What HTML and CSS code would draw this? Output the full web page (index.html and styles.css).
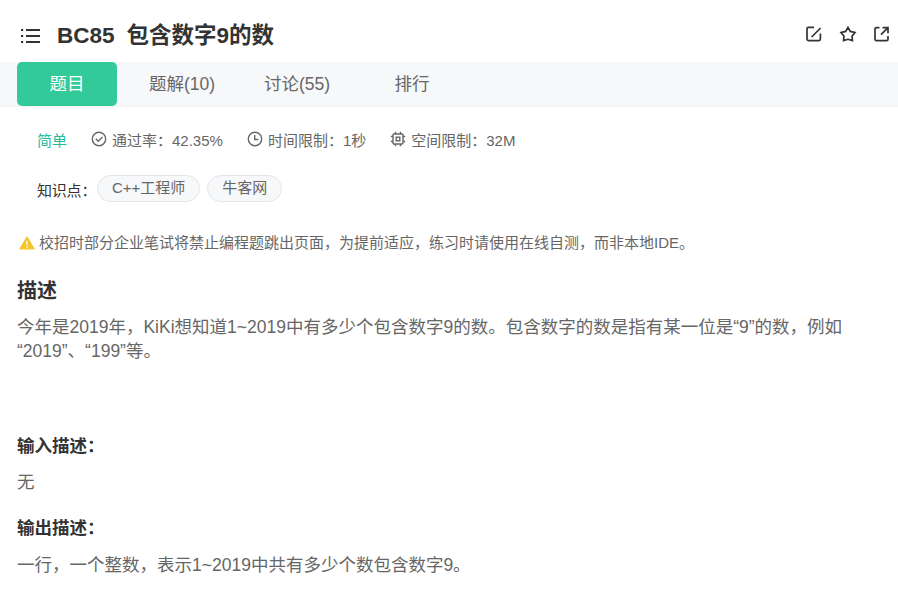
FILE: index.html
```
<!DOCTYPE html>
<html lang="zh-CN">
<head>
<meta charset="utf-8">
<title>BC85 包含数字9的数</title>
<link rel="stylesheet" href="styles.css">
</head>
<body>
<header class="header">
  <svg class="list-icon" width="20" height="16" viewBox="0 0 20 16"><path d="M5 2H19M5 8H19M5 14H19M0 2H2.2M0 8H2.2M0 14H2.2" stroke="#333" stroke-width="2"/></svg>
  <h1 class="title"><span>BC85</span><span>包含数字9的数</span></h1>
  <div class="actions">
    <svg width="16" height="16" viewBox="0 0 16 16"><path d="M8 1.3H2.6Q1 1.3 1 2.9V13Q1 14.6 2.6 14.6H12.8Q14.4 14.6 14.4 13V7.6M5.6 11L14.6 2"/></svg>
    <svg width="18" height="16" viewBox="0 0 18 16"><path d="M9 1.4L11.3 5.4L16 6.5L13.1 10L13.4 14.6L9 13.3L4.6 14.6L4.9 10L2 6.5L6.7 5.4Z"/></svg>
    <svg width="16" height="16" viewBox="0 0 16 16"><path d="M5.5 1.7H2.4Q1 1.7 1 3.1V13.2Q1 14.6 2.4 14.6H12.6Q14 14.6 14 13.2V10M8.5 1.6H14V7.2M14 1.6L7 8.7"/></svg>
  </div>
</header>
<nav class="tabs">
  <a class="tab active">题目</a>
  <a class="tab">题解(10)</a>
  <a class="tab">讨论(55)</a>
  <a class="tab">排行</a>
</nav>
<main class="content">
  <div class="meta">
    <span class="level">简单</span>
    <span class="stat"><svg width="16" height="16" viewBox="0 0 16 16"><circle cx="8" cy="8" r="6.7"/><path d="M4.8 7.8L7.2 10.2L11.5 5.9"/></svg>通过率：42.35%</span>
    <span class="stat"><svg width="16" height="16" viewBox="0 0 16 16"><circle cx="8" cy="8" r="6.7"/><path d="M7.7 4V8.5H11.4"/></svg>时间限制：1秒</span>
    <span class="stat"><svg width="16" height="16" viewBox="0 0 16 16"><rect x="3" y="3" width="10" height="10" rx="1"/><rect x="6.2" y="6.2" width="3.6" height="3.6"/><path d="M5.5 .8V3M10.5 .8V3M5.5 13V15.2M10.5 13V15.2M.8 5.5H3M.8 10.5H3M13 5.5H15.2M13 10.5H15.2"/></svg>空间限制：32M</span>
  </div>
  <div class="topics">
    <span class="topics-label">知识点：</span>
    <span class="tag">C++工程师</span>
    <span class="tag">牛客网</span>
  </div>
  <div class="notice"><svg width="16" height="14" viewBox="0 0 16 14"><path d="M8 1L15 12.8H1Z" fill="#f3c62d" stroke="#f3c62d" stroke-width="1.2" stroke-linejoin="round"/><path d="M8 4.8V8.8M8 10V11.5" stroke="#fff" stroke-width="1.4"/></svg>校招时部分企业笔试将禁止编程题跳出页面，为提前适应，练习时请使用在线自测，而非本地IDE。</div>
  <h2 class="heading">描述</h2>
  <p class="text description">今年是2019年，KiKi想知道1~2019中有多少个包含数字9的数。包含数字的数是指有某一位是“9”的数，例如“2019”、“199”等。</p>
  <h3 class="subheading">输入描述：</h3>
  <p class="text">无</p>
  <h3 class="subheading output">输出描述：</h3>
  <p class="text">一行，一个整数，表示1~2019中共有多少个数包含数字9。</p>
</main>
</body>
</html>
```
FILE: styles.css
```
* { box-sizing: border-box; }
body {
  margin: 0;
  background: #fff;
  color: #666;
  font-family: "Liberation Sans", "Noto Sans CJK SC", sans-serif;
  font-size: 15px;
}
h1, h2, h3, p { margin: 0; }
svg { flex: none; fill: none; }
.header {
  display: flex;
  align-items: center;
  height: 62px;
  padding: 9px 8px 0 21px;
}
.list-icon { margin-right: 16px; }
.title {
  display: flex;
  gap: 12px;
  color: #333;
  font-size: 22.5px;
  line-height: 30px;
}
.actions { display: flex; gap: 17px; margin: 0 1px 3px auto; transform: none; }
.header .actions { margin-right: 0; }
.actions svg { stroke: #333; stroke-width: 1.7; }
.tabs {
  display: flex;
  gap: 15px;
  height: 45px;
  padding-left: 17px;
  background: #f7f8fa;
  border-bottom: 1px solid #f2f3f5;
}
.tab {
  width: 100px;
  height: 44px;
  border-radius: 5px;
  font-size: 17.5px;
  line-height: 44px;
  text-align: center;
}
.active { background: #32ca99; color: #fff; }
.content { padding: 23px 17px 0; }
.meta {
  display: flex;
  gap: 24px;
  height: 22px;
  padding-left: 20px;
  line-height: 22px;
}
.level { color: #25bb9b; }
.stat { display: flex; }
.stat svg { margin: 1px 5px 0 0; stroke: #666; stroke-width: 1.4; }
.topics {
  display: flex;
  height: 27px;
  margin-top: 23px;
  padding-left: 20px;
}
.topics-label { width: 60px; color: #333; line-height: 32px; letter-spacing: -0.2px; white-space: nowrap; }
.tag {
  height: 27px;
  margin-right: 7px;
  padding: 0 14px;
  border: 1px solid #e3e5e8;
  border-radius: 14px;
  background: #f7f8fa;
  line-height: 24px;
}
.notice {
  display: flex;
  margin-top: 30px;
  padding-left: 2px;
  line-height: 22px;
}
.notice svg { margin: 4px 4px 0 0; }
.heading {
  margin-top: 22px;
  color: #333;
  font-size: 20px;
  line-height: 30px;
}
.text { font-size: 17.5px; line-height: 24px; }
.description { height: 119px; margin-top: 9px; }
.subheading { color: #333; font-size: 17.5px; line-height: 24px; }
.subheading + .text { margin-top: 12px; }
.output { margin-top: 22px; }
.output + .text { margin-top: 13px; }
```
